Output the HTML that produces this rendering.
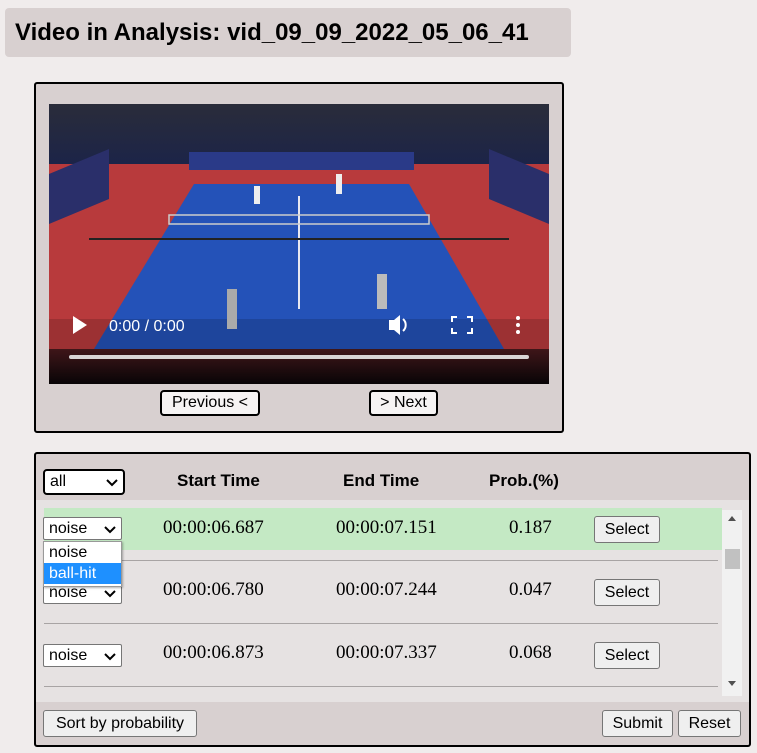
<!DOCTYPE html>
<html><head><meta charset="utf-8"><style>
*{box-sizing:border-box}
body{margin:0;width:757px;height:753px;background:#f0ecec;font-family:"Liberation Sans",Arial,sans-serif;position:relative;overflow:hidden}
.abs{position:absolute}
.hdr{left:5px;top:8px;width:566px;height:49px;background:#d8d0d0;border-radius:4px;font-weight:bold;font-size:24px;padding:11px 0 0 10px}
.panel{left:34px;top:82px;width:530px;height:351px;background:#d8d0d0;border:2px solid #000;border-radius:3px}
.btn{position:absolute;background:#efefef;border:1px solid #767676;border-radius:3px;font-size:16px;text-align:center;line-height:22px;color:#000}
.bbtn{border:2px solid #000;background:#f6f4f4;border-radius:4px;line-height:21px}
.tbl{left:34px;top:452px;width:717px;height:295px;background:#d8d0d0;border:2px solid #000;border-radius:3px}
.sel{position:absolute;background:#fff;border:1px solid #767676;border-radius:2px;font-size:16px;padding-left:5px;line-height:22px}
.sel svg{position:absolute;right:5px;top:8px}
.th{position:absolute;font-weight:bold;font-size:17px;top:17px}
.td{position:absolute;font-family:"Liberation Serif",serif;font-size:19px}
.line{position:absolute;left:8px;width:674px;height:1px;background:#a8a4a4}
</style></head><body>
<div class="abs hdr">Video in Analysis: vid_09_09_2022_05_06_41</div>
<div class="abs panel">
<svg class="abs" style="left:13px;top:20px" width="500" height="280" viewBox="0 0 500 280">
<defs><linearGradient id="top" x1="0" y1="0" x2="0" y2="1"><stop offset="0" stop-color="#2a2c3a"/><stop offset="1" stop-color="#1c2448"/></linearGradient>
<linearGradient id="bot" x1="0" y1="0" x2="0" y2="1"><stop offset="0" stop-color="#4a1a1e"/><stop offset="1" stop-color="#0a0608"/></linearGradient></defs>
<rect width="500" height="280" fill="#b83a3c"/>
<rect width="500" height="60" fill="url(#top)"/>
<polygon points="0,70 60,45 60,95 0,120" fill="#2a2f6a"/>
<polygon points="500,70 440,45 440,95 500,120" fill="#2a2f6a"/>
<rect x="140" y="48" width="225" height="18" fill="#2a3a88"/>
<polygon points="145,80 360,80 455,245 45,245" fill="#2452b8"/>
<line x1="250" y1="92" x2="250" y2="205" stroke="#e8e8f0" stroke-width="2"/>
<rect x="120" y="111" width="260" height="9" fill="none" stroke="#ccc" stroke-width="1.5"/>
<line x1="40" y1="135" x2="460" y2="135" stroke="#222" stroke-width="2"/>
<rect x="0" y="245" width="500" height="35" fill="url(#bot)"/>
<rect x="0" y="215" width="500" height="65" fill="#000" opacity=".15"/>
<rect x="205" y="82" width="6" height="18" fill="#eee"/>
<rect x="287" y="70" width="6" height="20" fill="#eee"/>
<rect x="178" y="185" width="10" height="40" fill="#aaa"/>
<rect x="328" y="170" width="10" height="35" fill="#bbb"/>
<polygon points="24,212 24,230 38,221" fill="#fff"/>
<text x="60" y="227" fill="#fff" font-size="16" font-family="Liberation Sans">0:00 / 0:00</text>
<polygon points="340,216 345,216 351,211 351,231 345,226 340,226" fill="#fff"/>
<path d="M354,215 a8,8 0 0 1 0,12" stroke="#fff" stroke-width="2" fill="none"/>
<path d="M403,218v-5h5M418,213h5v5M423,224v5h-5M408,229h-5v-5" stroke="#fff" stroke-width="2" fill="none"/>
<circle cx="469" cy="214" r="2" fill="#fff"/><circle cx="469" cy="221" r="2" fill="#fff"/><circle cx="469" cy="228" r="2" fill="#fff"/>
<rect x="20" y="251" width="460" height="4" rx="2" fill="#d8d4d4"/>
</svg>
<div class="btn bbtn" style="left:124px;top:306px;width:100px;height:26px">Previous &lt;</div>
<div class="btn bbtn" style="left:333px;top:306px;width:69px;height:26px">&gt; Next</div>
</div>
<div class="abs tbl">
<div class="sel" style="left:7px;top:15px;width:82px;height:26px;border:2px solid #000;border-radius:4px">all<svg width="12" height="8"><path d="M1,1 6,6 11,1" stroke="#000" stroke-width="2" fill="none"/></svg></div>
<div class="th" style="left:141px">Start Time</div>
<div class="th" style="left:307px">End Time</div>
<div class="th" style="left:453px">Prob.(%)</div>
<div class="abs" style="left:0;top:46px;width:713px;height:202px;background:#e6e2e2"></div>
<div class="abs" style="left:8px;top:54px;width:678px;height:42px;background:#c4e9c4"></div>
<div class="line" style="top:106px"></div>
<div class="line" style="top:169px"></div>
<div class="line" style="top:232px"></div>
<div class="abs" style="left:686px;top:56px;width:20px;height:186px;background:#f1f1f1"></div>
<div class="abs" style="left:689px;top:95px;width:15px;height:20px;background:#c1c1c1"></div>
<svg class="abs" style="left:689px;top:60px" width="14" height="182"><polygon points="3,7 11,7 7,2" fill="#505050"/><polygon points="3,167 11,167 7,172" fill="#505050"/></svg>

<div class="sel" style="left:7px;top:63px;width:79px;height:23px">noise<svg width="12" height="8"><path d="M1,1 6,6 11,1" stroke="#000" stroke-width="2" fill="none"/></svg></div>
<div class="td" style="left:127px;top:63px">00:00:06.687</div><div class="td" style="left:300px;top:63px">00:00:07.151</div><div class="td" style="left:473px;top:63px">0.187</div>
<div class="btn" style="left:558px;top:62px;width:66px;height:27px;line-height:25px">Select</div>

<div class="sel" style="left:7px;top:127px;width:79px;height:23px">noise<svg width="12" height="8"><path d="M1,1 6,6 11,1" stroke="#000" stroke-width="2" fill="none"/></svg></div>
<div class="td" style="left:127px;top:125px">00:00:06.780</div><div class="td" style="left:300px;top:125px">00:00:07.244</div><div class="td" style="left:473px;top:125px">0.047</div>
<div class="btn" style="left:558px;top:125px;width:66px;height:27px;line-height:25px">Select</div>

<div class="sel" style="left:7px;top:190px;width:79px;height:23px">noise<svg width="12" height="8"><path d="M1,1 6,6 11,1" stroke="#000" stroke-width="2" fill="none"/></svg></div>
<div class="td" style="left:127px;top:188px">00:00:06.873</div><div class="td" style="left:300px;top:188px">00:00:07.337</div><div class="td" style="left:473px;top:188px">0.068</div>
<div class="btn" style="left:558px;top:188px;width:66px;height:27px;line-height:25px">Select</div>

<div class="abs" style="left:7px;top:87px;width:79px;height:46px;background:#fff;border:1px solid #999;font-size:16px;box-shadow:1px 1px 2px rgba(0,0,0,.3)">
<div style="padding-left:5px;line-height:21px">noise</div>
<div style="padding-left:5px;line-height:21px;background:#1e90ff;color:#fff">ball-hit</div></div>

<div class="btn" style="left:7px;top:256px;width:154px;height:27px;line-height:25px">Sort by probability</div>
<div class="btn" style="left:566px;top:256px;width:71px;height:27px;line-height:25px">Submit</div>
<div class="btn" style="left:642px;top:256px;width:63px;height:27px;line-height:25px">Reset</div>
</div>
</body></html>
